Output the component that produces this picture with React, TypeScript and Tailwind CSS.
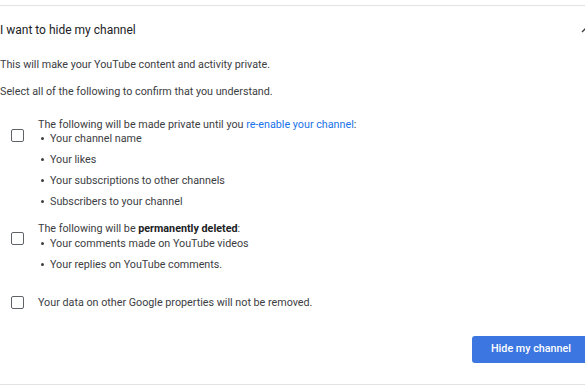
import React from "react";

const font = { fontFamily: "Roboto, 'Liberation Sans', sans-serif" };

function Box() {
  return <div className="w-[13px] h-[13px] border-[1.5px] border-[#5f6368] rounded-[2px] box-border" />;
}

function Bullet({ children }: { children: React.ReactNode }) {
  return (
    <li className="flex items-center h-[21px] leading-[21px]">
      <span className="ml-[3px] w-[3px] h-[3px] rounded-full bg-[#3c4043]" />
      <span className="ml-[6px]">{children}</span>
    </li>
  );
}

export default function App() {
  return (
    <div className="w-[585px] h-[386px] overflow-hidden bg-white" style={font}>
      <div className="w-[595px] text-[10.75px] text-[#3c4043]">
        <div className="mt-[5px] border-t border-[#e3e3e3]" />
        <div className="pt-[12px] flex items-center justify-between h-[36px]">
          <div className="text-[12px] leading-[24px] text-[#202124]">I want to hide my channel</div>
          <svg width="18" height="18" viewBox="0 0 24 24" className="mr-0">
            <path d="M12 8l-6 6 1.41 1.41L12 10.83l4.59 4.58L18 14z" fill="#3c4043" />
          </svg>
        </div>
        <div className="mt-[12px] leading-[21px]">This will make your YouTube content and activity private.</div>
        <div className="mt-[6px] leading-[21px]">Select all of the following to confirm that you understand.</div>

        <div className="mt-[12px] flex items-start">
          <div className="w-[38px] pl-[10.5px] pt-[15px]">
            <Box />
          </div>
          <div>
            <div className="leading-[21px]">
              The following will be made private until you{" "}
              <span className="text-[#1a73e8]">re-enable your channel</span>:
            </div>
            <ul className="-mt-[7px]">
              <Bullet>Your channel name</Bullet>
              <Bullet>Your likes</Bullet>
              <Bullet>Your subscriptions to other channels</Bullet>
              <Bullet>Subscribers to your channel</Bullet>
            </ul>
          </div>
        </div>

        <div className="mt-[6px] flex items-start">
          <div className="w-[38px] pl-[10.5px] pt-[14px]">
            <Box />
          </div>
          <div>
            <div className="leading-[21px]">
              The following will be <span className="font-bold text-[#202124]">permanently deleted</span>:
            </div>
            <ul className="-mt-[6px]">
              <Bullet>Your comments made on YouTube videos</Bullet>
              <Bullet>Your replies on YouTube comments.</Bullet>
            </ul>
          </div>
        </div>

        <div className="mt-[17px] flex items-start">
          <div className="w-[38px] pl-[10.5px] pt-[4px]">
            <Box />
          </div>
          <div className="leading-[21px]">Your data on other Google properties will not be removed.</div>
        </div>

        <div className="mt-[23px] flex justify-end pr-[5px]">
          <button className="h-[27px] px-[19px] rounded-[3px] bg-[#3b76e1] text-white text-[10.75px] font-medium">
            Hide my channel
          </button>
        </div>
        <div className="mt-[21px] border-t border-[#e3e3e3]" />
      </div>
    </div>
  );
}
